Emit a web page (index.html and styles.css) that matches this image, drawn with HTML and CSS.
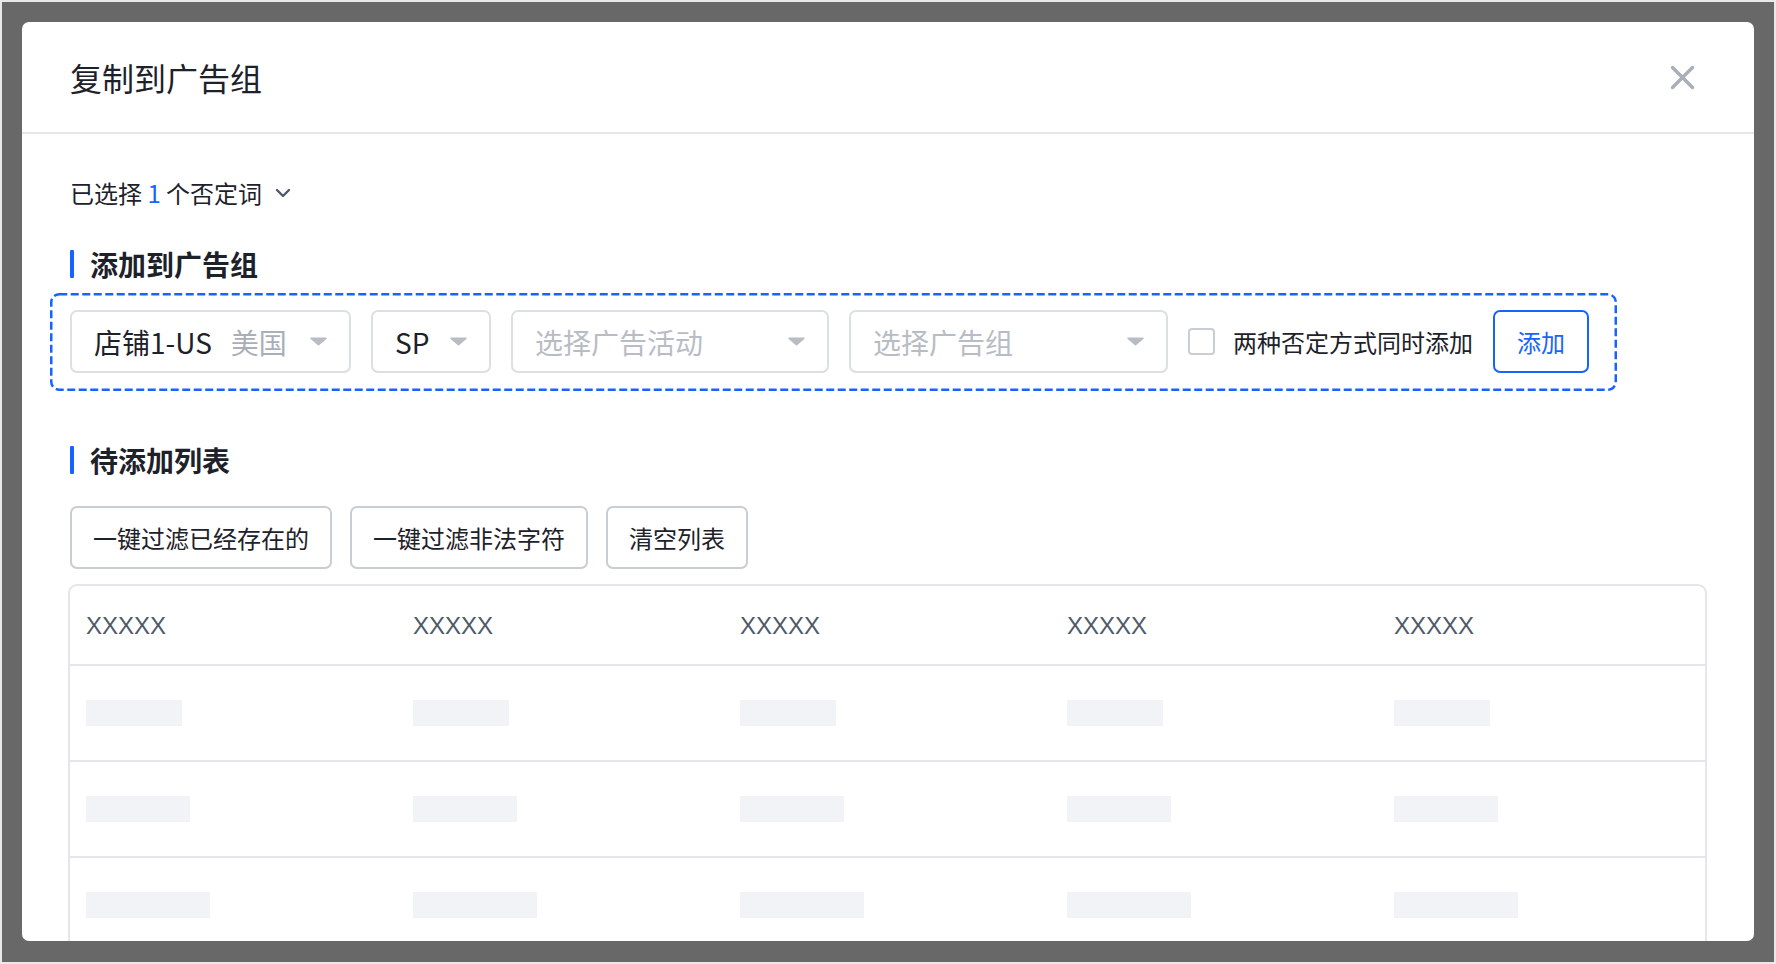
FILE: index.html
```html
<!DOCTYPE html>
<html lang="zh-CN">
<head>
<meta charset="utf-8">
<title>复制到广告组</title>
<link rel="stylesheet" href="styles.css">
</head>
<body>
<div class="backdrop">
  <div class="modal">
    <div class="modal-header">
      <h1 class="modal-title">复制到广告组</h1>
      <button class="close-btn" aria-label="关闭">
        <svg width="25" height="25" viewBox="0 0 25 25"><path d="M2.5 2.5 L22.5 22.5 M22.5 2.5 L2.5 22.5" stroke="#a9aeb8" stroke-width="3.4" stroke-linecap="round" fill="none"/></svg>
      </button>
    </div>
    <div class="modal-body">
      <div class="selected-info">
        <span>已选择 <span class="num">1</span> 个否定词</span>
        <svg class="chev" width="16" height="10" viewBox="0 0 16 10"><path d="M2 2 L8 8 L14 2" stroke="#4e5969" stroke-width="2.4" fill="none" stroke-linecap="round" stroke-linejoin="round"/></svg>
      </div>

      <h2 class="section-title">添加到广告组</h2>
      <div class="add-box">
        <svg class="dash-frame" aria-hidden="true"><rect rx="8" ry="8"/></svg>
        <div class="select w-store">
          <span class="val">店铺1-US</span><span class="sub">美国</span>
          <svg class="caret" width="17" height="9" viewBox="0 0 17 9"><path d="M1 0.5 H16 a0.8 0.8 0 0 1 0.6 1.3 L9.1 8.3 a0.9 0.9 0 0 1 -1.2 0 L0.4 1.8 A0.8 0.8 0 0 1 1 0.5 Z" fill="#b8bcc3"/></svg>
        </div>
        <div class="select w-type">
          <span class="val">SP</span>
          <svg class="caret" width="17" height="9" viewBox="0 0 17 9"><path d="M1 0.5 H16 a0.8 0.8 0 0 1 0.6 1.3 L9.1 8.3 a0.9 0.9 0 0 1 -1.2 0 L0.4 1.8 A0.8 0.8 0 0 1 1 0.5 Z" fill="#b8bcc3"/></svg>
        </div>
        <div class="select w-campaign">
          <span class="placeholder">选择广告活动</span>
          <svg class="caret" width="17" height="9" viewBox="0 0 17 9"><path d="M1 0.5 H16 a0.8 0.8 0 0 1 0.6 1.3 L9.1 8.3 a0.9 0.9 0 0 1 -1.2 0 L0.4 1.8 A0.8 0.8 0 0 1 1 0.5 Z" fill="#b8bcc3"/></svg>
        </div>
        <div class="select w-group">
          <span class="placeholder">选择广告组</span>
          <svg class="caret" width="17" height="9" viewBox="0 0 17 9"><path d="M1 0.5 H16 a0.8 0.8 0 0 1 0.6 1.3 L9.1 8.3 a0.9 0.9 0 0 1 -1.2 0 L0.4 1.8 A0.8 0.8 0 0 1 1 0.5 Z" fill="#b8bcc3"/></svg>
        </div>
        <label class="check">
          <span class="check-box"></span>
          <span class="check-label">两种否定方式同时添加</span>
        </label>
        <button class="btn-primary-outline">添加</button>
      </div>

      <h2 class="section-title second">待添加列表</h2>
      <div class="actions">
        <button class="btn">一键过滤已经存在的</button>
        <button class="btn">一键过滤非法字符</button>
        <button class="btn">清空列表</button>
      </div>

      <div class="table">
        <div class="tr head">
          <div class="th">XXXXX</div>
          <div class="th">XXXXX</div>
          <div class="th">XXXXX</div>
          <div class="th">XXXXX</div>
          <div class="th">XXXXX</div>
        </div>
        <div class="tr">
          <div class="td"><span class="sk sk-1"></span></div>
          <div class="td"><span class="sk sk-1"></span></div>
          <div class="td"><span class="sk sk-1"></span></div>
          <div class="td"><span class="sk sk-1"></span></div>
          <div class="td"><span class="sk sk-1"></span></div>
        </div>
        <div class="tr">
          <div class="td"><span class="sk sk-2"></span></div>
          <div class="td"><span class="sk sk-2"></span></div>
          <div class="td"><span class="sk sk-2"></span></div>
          <div class="td"><span class="sk sk-2"></span></div>
          <div class="td"><span class="sk sk-2"></span></div>
        </div>
        <div class="tr">
          <div class="td"><span class="sk sk-3"></span></div>
          <div class="td"><span class="sk sk-3"></span></div>
          <div class="td"><span class="sk sk-3"></span></div>
          <div class="td"><span class="sk sk-3"></span></div>
          <div class="td"><span class="sk sk-3"></span></div>
        </div>
      </div>
    </div>
  </div>
</div>
</body>
</html>
```

FILE: styles.css
```css
* { box-sizing: border-box; }

html, body {
  margin: 0;
  padding: 0;
}

body {
  font-family: "Noto Sans CJK SC", "Noto Sans", sans-serif;
  color: #1d2129;
}

.backdrop {
  width: 1776px;
  height: 964px;
  border: 2px solid #e9e9eb;
  background: #686868;
  padding: 20px;
  overflow: hidden;
}

.modal {
  width: 1732px;
  height: 919px;
  background: #fff;
  border-radius: 7px;
  overflow: hidden;
}

.modal-header {
  height: 112px;
  border-bottom: 2px solid #e5e6eb;
  display: flex;
  align-items: center;
  justify-content: space-between;
  padding: 0 59px 0 48px;
}

.modal-title {
  margin: 0;
  font-size: 32px;
  font-weight: 400;
  line-height: 44px;
  color: #1d2129;
}

.close-btn {
  border: 0;
  background: none;
  padding: 0;
  width: 25px;
  height: 25px;
  display: flex;
  margin-top: 1px;
}

.modal-body {
  padding: 41px 48px 0;
}

.selected-info {
  display: flex;
  align-items: center;
  font-size: 24px;
  line-height: 36px;
  color: #1d2129;
}

.selected-info .num {
  color: #1664ff;
}

.chev {
  margin-left: 13px;
  margin-top: -1px;
}

.section-title {
  margin: 35px 0 0;
  display: flex;
  align-items: center;
  gap: 16px;
  font-size: 28px;
  font-weight: 700;
  line-height: 36px;
  color: #1d2129;
}

.section-title::before {
  content: "";
  width: 4px;
  height: 28px;
  background: #1664ff;
  border-radius: 1px;
}

.section-title.second {
  margin-top: 51px;
}

.add-box {
  position: relative;
  margin: 11px 0 0 -20px;
  width: max-content;
  display: flex;
  align-items: center;
  gap: 20px;
  padding: 17px 28px 18px 20px;
}

.dash-frame {
  position: absolute;
  left: 0;
  top: 0;
  width: 100%;
  height: 100%;
  pointer-events: none;
  overflow: visible;
}

.dash-frame rect {
  x: 1.25px;
  y: 1.25px;
  width: calc(100% - 2.5px);
  height: calc(100% - 2.5px);
  fill: none;
  stroke: #1664ff;
  stroke-width: 2.5px;
  stroke-dasharray: 8 3.5;
}

.select {
  height: 63px;
  border: 2px solid #dcdfe4;
  border-radius: 7px;
  display: flex;
  align-items: center;
  padding: 0 22px 0 22px;
  font-size: 28px;
  line-height: 36px;
  background: #fff;
}

.select .val { color: #1d2129; }

.select .sub {
  color: #a9aeb8;
  margin-left: 19px;
}

.select .placeholder { color: #b8bcc4; }

.select .caret {
  margin-left: auto;
  flex: none;
}

.w-store { width: 281px; }
.w-type { width: 120px; }
.w-campaign { width: 318px; }
.w-group { width: 319px; }

.check {
  display: flex;
  align-items: center;
  gap: 18px;
}

.check-box {
  width: 27px;
  height: 27px;
  border: 2px solid #c9cdd4;
  border-radius: 4px;
  background: #fff;
}

.check-label {
  font-size: 24px;
  line-height: 36px;
  color: #1d2129;
}

.btn-primary-outline {
  width: 96px;
  height: 63px;
  border: 2px solid #1664ff;
  border-radius: 7px;
  background: #fff;
  color: #1664ff;
  font-family: inherit;
  font-size: 24px;
  padding: 0;
}

.actions {
  margin-top: 28px;
  display: flex;
  gap: 18px;
}

.btn {
  height: 63px;
  padding: 0 21px;
  border: 2px solid #c9cdd4;
  border-radius: 7px;
  background: #fff;
  font-family: inherit;
  font-size: 24px;
  color: #1d2129;
}

.table {
  margin: 15px -1px 0 -2px;
  border: 2px solid #e5e6eb;
  border-radius: 9px;
}

.tr {
  display: grid;
  grid-template-columns: repeat(5, 1fr);
  border-bottom: 2px solid #e5e6eb;
}

.th {
  height: 78px;
  display: flex;
  align-items: center;
  padding-left: 16px;
  padding-top: 2px;
  font-family: "Liberation Sans", "Noto Sans CJK SC", sans-serif;
  font-size: 24px;
  color: #4e5969;
}

.td {
  height: 94px;
  display: flex;
  align-items: center;
  padding-left: 16px;
}

.sk {
  display: block;
  height: 26px;
  background: #f2f3f6;
}

.sk-1 { width: 96px; }
.sk-2 { width: 104px; }
.sk-3 { width: 124px; }
```
